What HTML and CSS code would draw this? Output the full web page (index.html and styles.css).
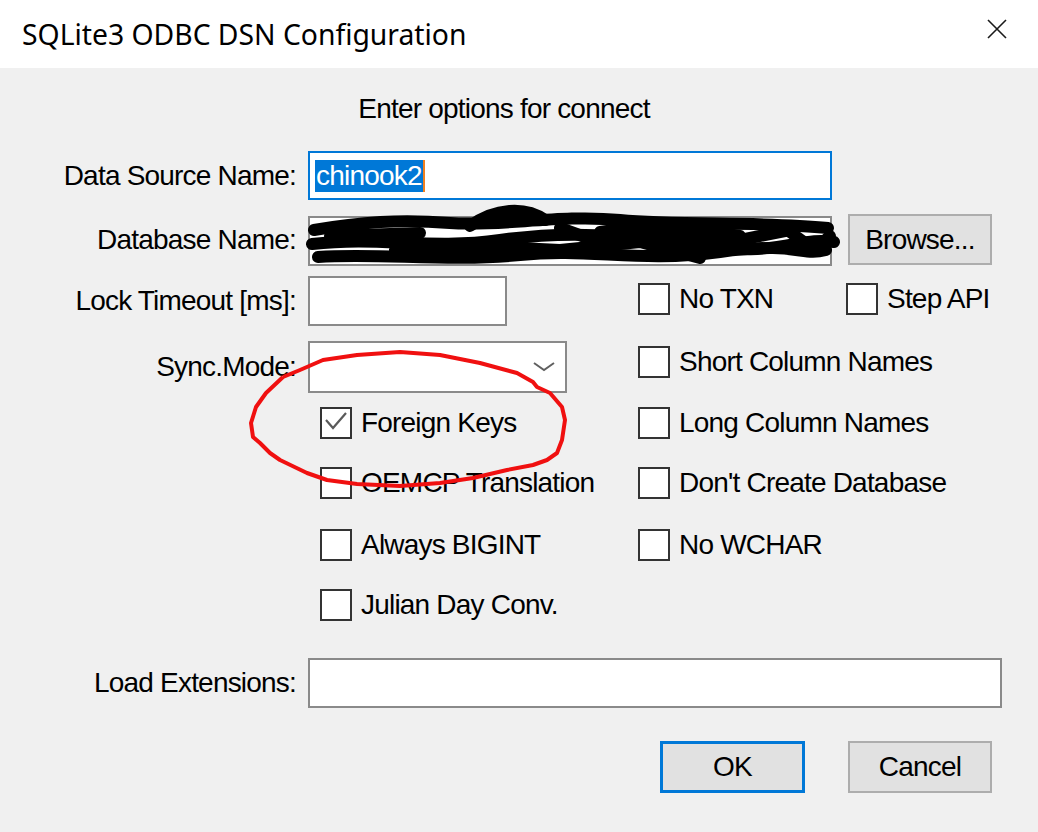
FILE: index.html
```html
<!DOCTYPE html>
<html lang="en">

<head>
    <meta charset="UTF-8">
    <meta name="viewport" content="width=device-width, initial-scale=1.0">
    <title>SQLite3 ODBC DSN Configuration</title>
    <link rel="stylesheet" href="styles.css">
</head>

<body>
    <div class="titlebar">
        <span class="title">SQLite3 ODBC DSN Configuration</span>
        <svg class="close" width="22" height="22" viewBox="0 0 22 22">
            <path d="M2 2 L20 20 M20 2 L2 20" stroke="#1a1a1a" stroke-width="1.6" fill="none" />
        </svg>
    </div>

    <div class="dialog">
        <p class="intro">Enter options for connect</p>

        <div class="form">
            <!-- row 1 -->
            <label class="lbl r49" for="dsn">Data Source Name:</label>
            <div class="field focus w524 h49" id="dsn"><span class="sel">chinook2</span></div>

            <!-- row 2 -->
            <label class="lbl r52" for="db">Database Name:</label>
            <div class="field w524 h50 mt2" id="db"></div>
            <button type="button" class="btn c4 browse">Browse...</button>

            <!-- row 3 -->
            <label class="lbl r50" for="lock">Lock Timeout [ms]:</label>
            <div class="field w199 h50" id="lock"></div>
            <div class="check c3 mt7"><span class="box"></span>No TXN</div>
            <div class="check c4 mt7"><span class="box"></span>Step API</div>

            <!-- row 4 -->
            <label class="lbl r52" for="sync">Sync.Mode:</label>
            <div class="field combo w259 h52" id="sync">
                <svg width="22" height="12" viewBox="0 0 22 12">
                    <path d="M1 2 L11 9 L21 2" stroke="#606060" stroke-width="2" fill="none" />
                </svg>
            </div>
            <div class="check c3 mt5"><span class="box"></span>Short Column Names</div>

            <!-- row 5 -->
            <div class="check c2 ml12"><span class="box">
                <svg width="28" height="28" viewBox="0 0 28 28">
                    <path d="M4 11 L11 19 L24 4" stroke="#5a5a5a" stroke-width="2.2" fill="none" />
                </svg>
            </span>Foreign Keys</div>
            <div class="check c3"><span class="box"></span>Long Column Names</div>

            <!-- row 6 -->
            <div class="check c2 ml12"><span class="box"></span>OEMCP Translation</div>
            <div class="check c3"><span class="box"></span>Don't Create Database</div>

            <!-- row 7 -->
            <div class="check c2 ml12"><span class="box"></span>Always BIGINT</div>
            <div class="check c3"><span class="box"></span>No WCHAR</div>

            <!-- row 8 -->
            <div class="check c2 ml12"><span class="box"></span>Julian Day Conv.</div>

            <!-- row 9 -->
            <label class="lbl r50" for="ext">Load Extensions:</label>
            <div class="field span w694 h50" id="ext"></div>

            <!-- row 10 -->
            <button type="button" class="btn c3 ok">OK</button>
            <button type="button" class="btn c4 cancel">Cancel</button>
        </div>
    </div>

    <!-- hand drawn marks on top of the screenshot -->
    <svg class="marks" width="1038" height="832" viewBox="0 0 1038 832">
        <g stroke="#000" stroke-width="12" fill="none" stroke-linecap="round" stroke-linejoin="round">
            <path d="M314 230 C360 222 400 219 450 223 S 560 214 620 220 S 760 221 828 228" />
            <path d="M312 244 C380 236 430 250 500 240 S 620 235 700 246 S 800 236 834 242" />
            <path d="M318 257 C380 253 450 262 520 255 S 640 263 720 252 S 800 257 826 250" />
            <path d="M470 226 C495 208 525 206 545 220" />
            <path d="M600 232 C640 226 690 228 740 236" />
            <path d="M330 236 L420 233 L395 250 L480 246 L560 250 L640 242 L700 258" />
            <path d="M560 228 L610 246 L660 230 L720 244 L790 230" />
            <path d="M790 232 L815 250 L830 236" />
        </g>
        <path d="M283 377 L300 370 L323 360 L357 355 L400 352 L440 355 L480 363 L517 373 L533 382 L537 387 L550 393 L562 407 L565 420 L562 440 L557 453 L547 460 L533 465 L507 470 L473 478 L440 483 L400 486 L357 484 L327 480 L307 473 L280 460 L270 453 L260 443 L253 437 L251 423 L256 407 L266 393 L283 377"
            stroke="#f01010" stroke-width="4" fill="none" stroke-linejoin="round" />
    </svg>
</body>

</html>
```

FILE: styles.css
```css
* {
    box-sizing: border-box;
}

body {
    margin: 0;
    width: 1038px;
    height: 832px;
    overflow: hidden;
    position: relative;
    background: #f0f0f0;
    font-family: "Liberation Sans", Arial, sans-serif;
    color: #000;
}

.titlebar {
    height: 68px;
    background: #fff;
    display: flex;
    align-items: center;
    justify-content: space-between;
    padding: 0 30px 0 22px;
}

.title {
    font-family: "Noto Sans", "Open Sans", sans-serif;
    font-size: 28.3px;
    color: #000;
}

.close {
    margin-top: -10px;
}

.dialog {
    padding-top: 26px;
    font-size: 28px;
    letter-spacing: -0.8px;
}

.intro {
    margin: 0;
    height: 30px;
    line-height: 30px;
    text-align: center;
    padding-right: 30px;
}

.form {
    margin-top: 27px;
    display: grid;
    grid-template-columns: 308px 330px 208px 1fr;
    grid-template-rows: 63px 62px 65px 66px 60px 62px 60px 69px 83px 53px;
    align-items: start;
}

.lbl {
    grid-column: 1;
    display: flex;
    align-items: center;
    justify-content: flex-end;
    padding-right: 12px;
    white-space: nowrap;
}

.r49 { height: 49px; }
.r50 { height: 50px; }
.r52 { height: 52px; }

.field {
    grid-column: 2;
    background: #fff;
    border: 2px solid #8a8a8a;
    display: flex;
    align-items: center;
}

.field.focus {
    border-color: #0078d7;
    padding-left: 5px;
}

.field.span {
    grid-column: 2 / -1;
}

.combo {
    justify-content: flex-end;
    padding-right: 10px;
}

.sel {
    background: #0078d7;
    color: #fff;
    height: 32px;
    line-height: 32px;
    padding: 0 1px;
    border-right: 2px solid #f08020;
}

.w524 { width: 524px; }
.w199 { width: 199px; }
.w259 { width: 259px; }
.w694 { width: 694px; }
.h49 { height: 49px; }
.h50 { height: 50px; }
.h52 { height: 52px; }
.mt2 { margin-top: 2px; }
.mt5 { margin-top: 5px; }
.mt7 { margin-top: 7px; }
.ml12 { margin-left: 12px; }

.c2 { grid-column: 2; }
.c3 { grid-column: 3; }
.c4 { grid-column: 4; }

.check {
    display: flex;
    align-items: center;
    gap: 9px;
    white-space: nowrap;
    height: 32px;
}

.box {
    width: 32px;
    height: 32px;
    background: #fff;
    border: 2px solid #333;
    display: flex;
    align-items: center;
    justify-content: center;
    flex: none;
}

.btn {
    font-family: inherit;
    font-size: 28px;
    letter-spacing: -0.8px;
    color: #000;
    background: #e1e1e1;
    border: 2px solid #adadad;
    width: 144px;
    padding: 0;
    margin-left: 2px;
}

.browse {
    height: 51px;
}

.ok {
    margin-left: 22px;
    width: 145px;
    height: 52px;
    border: 3px solid #0078d7;
}

.cancel {
    height: 52px;
}

.marks {
    position: absolute;
    top: 0;
    left: 0;
    pointer-events: none;
}
```
